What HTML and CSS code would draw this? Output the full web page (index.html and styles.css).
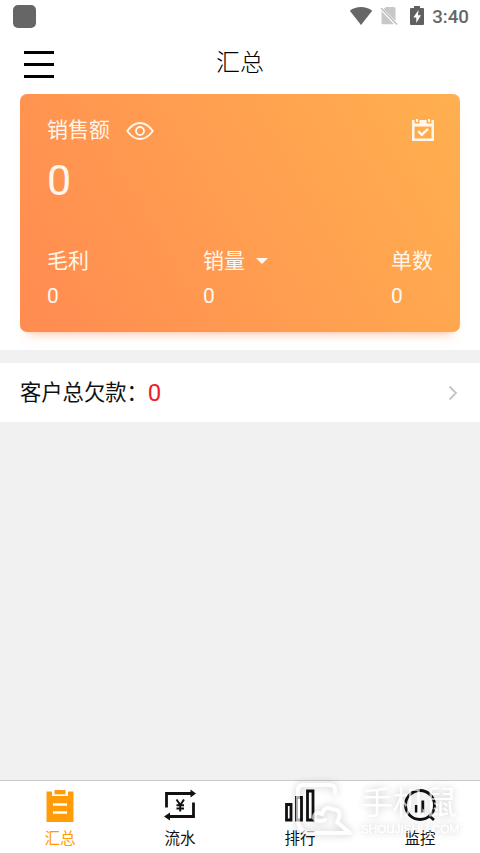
FILE: index.html
```html
<!DOCTYPE html>
<html lang="zh-CN">
<head>
<meta charset="utf-8">
<title>汇总</title>
<link rel="stylesheet" href="styles.css">
</head>
<body>
<div class="app">
  <header class="status">
    <span class="app-dot"></span>
    <div class="indicators">
      <svg class="wifi" width="24" height="20" viewBox="0 0 24 20"><path d="M.8 4.8C7-.2 17-.2 23.2 4.8L12 19z"/></svg>
      <svg class="sim" width="18" height="20" viewBox="0 0 18 20"><path d="M6 1H14q1.500 0 1.500 1.500V15L3.500 3.300zM1.500 5L14 18.300H3q-1.500 0-1.500-1.500z"/><path class="slash" d="M1 2L17 18.500"/></svg>
      <svg class="battery" width="14" height="20" viewBox="0 0 14 20"><path d="M4 0h6v2h3q1 0 1 1v15q0 1-1 1H1q-1 0-1-1V3q0-1 1-1h3z"/><path class="bolt" d="M8.500 4L3.300 11.500h3V17l4.700-7.800H8z"/></svg>
      <span class="time">3:40</span>
    </div>
  </header>
  <nav class="title-bar">
    <span class="menu"><i></i><i></i><i></i></span>
    <h1>汇总</h1>
  </nav>
  <main>
    <section class="summary">
      <div class="card">
        <div class="card-head">
          <span>销售额</span>
          <svg class="eye" width="28" height="20" viewBox="0 0 28 20"><path d="M1.200 10Q7 2 14 2t12.800 8Q21 18 14 18T1.200 10z"/><circle cx="14" cy="10" r="4"/></svg>
          <svg class="calendar" width="22" height="22" viewBox="0 0 22 22"><path fill-rule="evenodd" d="M0 1h2.500v3.500h5V1h7v3.500h5V1H22v21H0zM2.500 7.500v12h17v-12z"/><path d="M4 0h2v3H4zM16 0h2v3h-2z"/><path class="check" d="M6.300 12.200l3.500 3.600 6.200-6"/></svg>
        </div>
        <div class="amount">0</div>
        <div class="stats">
          <div class="stat"><span>毛利</span><b>0</b></div>
          <div class="stat"><span>销量<i class="caret"></i></span><b>0</b></div>
          <div class="stat"><span>单数</span><b>0</b></div>
        </div>
      </div>
    </section>
    <section class="debt">
      <span>客户总欠款：</span><b>0</b>
      <svg class="chevron" width="10" height="16" viewBox="0 0 10 16"><path d="M1.500 1.500L8 8l-6.500 6.500"/></svg>
    </section>
  </main>
  <footer class="tabs">
    <div class="tab active">
      <svg width="32" height="36" viewBox="0 0 32 36"><path class="fill" d="M2.500 3.500H8V8h16V3.500h5.500V34h-27z"/><path class="fill" d="M10.500 2h11v4.300h-11z"/><path class="lines" d="M9 16.500h14M9 24.500h14"/></svg>
      <span>汇总</span>
    </div>
    <div class="tab">
      <svg width="32" height="36" viewBox="0 0 32 36"><path class="ink" d="M2.500 19.500V5.500H27M29.500 14.500V28.500H5"/><path class="fill" d="M26.500 1.500l5.500 4-5.500 4zM6 24.500l-6 4 6 4z"/><path class="yen" d="M12.500 11.500l3.800 5.500L20 11.500M16.200 17v6.500M12.500 17.200H20M12.500 20.500H20"/></svg>
      <span>流水</span>
    </div>
    <div class="tab">
      <svg width="32" height="36" viewBox="0 0 32 36"><path class="bars" d="M2.500 16.500h4.500v15.500H2.500zM12.500 9.500h5V32h-5zM23.500 3h5.500v29h-5.500z"/></svg>
      <span>排行</span>
    </div>
    <div class="tab">
      <svg width="36" height="36" viewBox="0 0 36 36"><circle class="ring" cx="18" cy="17" r="14.500"/><path class="ring" d="M27.500 28l4.500 4M14.300 17v7.500M20.800 12.500v12"/></svg>
      <span>监控</span>
    </div>
    <div class="watermark">
      <svg width="60" height="58" viewBox="0 0 60 58"><path d="M41 13V10Q41 5 36 5H9Q4 5 4 10V39Q4 53 18 53H56L43 42Q50 30 38 29Q31 25 28 34Q20 31 20 38Q23 43 31 40"/></svg>
      <div class="mark-text"><span>手机鼠</span><small>SHOUJISHU.COM</small></div>
    </div>
  </footer>
</div>
</body>
</html>
```
FILE: styles.css
```css
* { box-sizing: border-box; }
body { margin: 0; font-family: Roboto, "Noto Sans CJK SC", sans-serif; color: #111; }
b, i, h1 { font-weight: 400; font-style: normal; }
svg { display: block; flex: none; fill: none; }
.app { height: 853px; display: flex; flex-direction: column; background: #f1f1f1; overflow: hidden; }
.status { height: 34px; flex: none; display: flex; justify-content: space-between; align-items: flex-start; padding: 5px 11px 0 13px; background: #fff; }
.app-dot { width: 23px; height: 23px; border-radius: 5px; background: #666; }
.indicators { display: flex; align-items: flex-start; color: #666; padding-top: 1px; }
.wifi { fill: #666; margin-right: 7px; }
.sim { fill: #c8c8c8; margin-right: 12px; }
.slash { stroke: #bbb; stroke-width: 1.300; }
.battery { fill: #606060; margin-right: 8px; }
.bolt { fill: #fff; }
.time { font-size: 18.700px; line-height: 22px; font-weight: 500; }
.title-bar { height: 59px; flex: none; background: #fff; display: grid; grid-template-columns: 80px 1fr 80px; }
.menu { padding: 17px 0 0 24px; display: flex; flex-direction: column; gap: 9px; }
.menu i { width: 30px; height: 3px; background: #000; }
h1 { margin: 0; text-align: center; font-size: 24px; line-height: 58px; font-weight: 300; color: #000; }
.summary { height: 257px; background: #fff; padding: 1px 20px 0; }
.card { height: 238px; border-radius: 7px; padding: 19px 26px 0 27px; color: #fff7ed; background: linear-gradient(60deg, #ff8b51, #ffb04f); box-shadow: 0 9px 10px -8px rgba(255,139,81,.6); }
.card-head { display: flex; align-items: center; height: 32px; font-size: 21px; }
.card-head span { margin-top: -2px; }
.eye { margin: 3px 0 0 16px; stroke: #fff7ed; stroke-width: 1.800; }
.calendar { margin: 2px 0 0 auto; fill: #fff7ed; }
.check { fill: none; stroke: #fff7ed; stroke-width: 2.500; }
.amount { font-size: 43px; line-height: 54px; margin-top: 8px; }
.stats { display: flex; justify-content: space-between; margin-top: 37px; font-size: 21px; }
.stat { display: flex; flex-direction: column; line-height: 34px; }
.stat b { padding-top: 1px; }
.stat:nth-child(2) { margin-right: 9px; }
.stat:last-child { margin-right: 1px; }
.stat span { display: flex; align-items: center; }
.caret { margin-left: 11px; border: 6px solid transparent; border-top-color: #fff7ed; border-bottom: 0; }
.debt { height: 59px; margin-top: 13px; background: #fff; padding: 0 22px 0 20px; display: flex; align-items: center; font-size: 21.300px; }
.debt span { margin-top: -4px; }
.debt b { color: #e9222c; font-size: 24px; }
.chevron { margin-left: auto; stroke: #c4c4c4; stroke-width: 1.800; }
.tabs { position: relative; margin-top: auto; height: 73px; border-top: 1px solid #c8c8c8; background: #fff; display: grid; grid-template-columns: repeat(4, 1fr); }
.tab { display: flex; flex-direction: column; align-items: center; padding-top: 7px; font-size: 15.500px; line-height: 30px; color: #111; }
.active { color: #ff9c08; }
.fill { fill: currentColor; }
.lines { stroke: #fff; stroke-width: 2.500; }
.ink, .ring, .bars { stroke: #111; stroke-width: 2.800; }
.yen { stroke: #111; stroke-width: 2; }
.watermark { position: absolute; left: 294px; top: -1px; display: flex; color: #fff; opacity: .65; filter: drop-shadow(0 0 5px rgba(0,0,0,.22)) drop-shadow(0 0 3px rgba(0,0,0,.12)); }
.watermark svg { stroke: #fff; stroke-width: 4; stroke-linecap: round; stroke-linejoin: round; }
.mark-text { display: flex; flex-direction: column; padding: 5px 0 0 7px; }
.mark-text span { font-size: 32px; line-height: 37px; }
.mark-text small { font: 11.700px/13px "Liberation Sans", sans-serif; -webkit-text-stroke: .3px #fff; }
```
